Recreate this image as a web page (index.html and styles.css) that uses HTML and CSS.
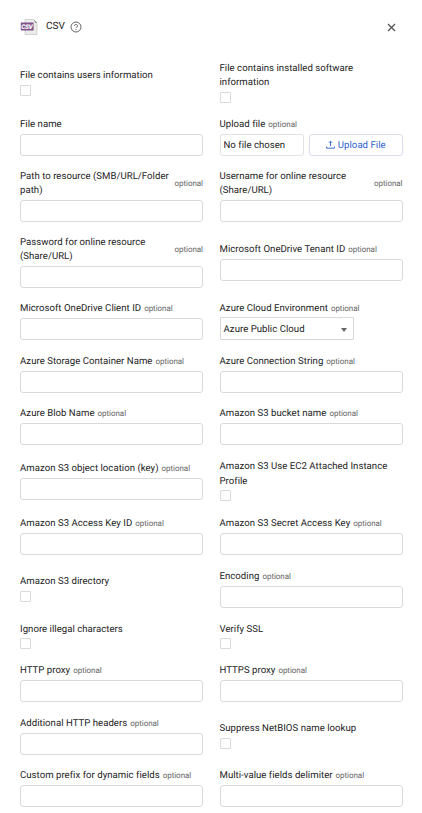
FILE: index.html
```html
<!DOCTYPE html>
<html lang="en">
<head>
<meta charset="utf-8">
<title>CSV</title>
<link rel="stylesheet" href="styles.css">
</head>
<body>
<header class="header">
  <svg class="logo" width="18" height="18" viewBox="0 0 18 18">
    <path d="M5 1.500h8.500l3.500 3.500v11.500H5z" fill="#ececea" stroke="#c9c9c7" stroke-width=".8"/>
    <path d="M13.500 1.200l3.500 3.800h-1.500z" fill="#777"/>
    <rect x="0.800" y="4.500" width="12.800" height="8" fill="#80528c"/>
    <text class="logo-text" x="1.200" y="10.900" textLength="11.500">CSV</text>
  </svg>
  <h1 class="title">CSV</h1>
  <svg class="help" width="12" height="12" viewBox="0 0 12 12" fill="none" stroke="#555">
    <circle cx="6" cy="6" r="5" stroke-width=".9"/>
    <path d="M4.500 4.900a1.500 1.400 0 1 1 2.300 1.100c-.6.4-.8.600-.8 1.100M6 8v.9" stroke-width=".9"/>
  </svg>
  <svg class="close" width="9" height="9" viewBox="0 0 9 9" stroke="#555" stroke-width="1.300"><path d="M1 1l7 7M8 1l-7 7"/></svg>
</header>
<form class="form">
  <div class="field check"><label>File contains users information</label><span class="box"></span></div>
  <div class="field check"><label>File contains installed software information</label><span class="box"></span></div>

  <div class="field"><div class="caption"><label>File name</label></div><div class="input"></div></div>
  <div class="field"><div class="caption"><label>Upload file</label><small>optional</small></div>
    <div class="upload"><div class="file">No file chosen</div><div class="button"><svg width="9" height="9" viewBox="0 0 9 9" fill="none" stroke="#2b5fd0" stroke-width=".9"><path d="M.6 6.500v1.700h7.800V6.500M4.500 6.200V1.200M2.900 2.800l1.600-1.600 1.600 1.600"/></svg><span class="button-text">Upload File</span></div></div></div>

  <div class="field"><div class="caption"><label>Path to resource (SMB/URL/Folder path)</label><small>optional</small></div><div class="input"></div></div>
  <div class="field"><div class="caption wide"><label>Username for online resource (Share/URL)</label><small>optional</small></div><div class="input"></div></div>

  <div class="field"><div class="caption wide"><label>Password for online resource (Share/URL)</label><small>optional</small></div><div class="input"></div></div>
  <div class="field"><div class="caption"><label>Microsoft OneDrive Tenant ID</label><small>optional</small></div><div class="input"></div></div>

  <div class="field"><div class="caption"><label>Microsoft OneDrive Client ID</label><small>optional</small></div><div class="input"></div></div>
  <div class="field"><div class="caption"><label>Azure Cloud Environment</label><small>optional</small></div><div class="select">Azure Public Cloud<i class="arrow"></i></div></div>

  <div class="field"><div class="caption"><label>Azure Storage Container Name</label><small>optional</small></div><div class="input"></div></div>
  <div class="field"><div class="caption"><label>Azure Connection String</label><small>optional</small></div><div class="input"></div></div>

  <div class="field"><div class="caption"><label>Azure Blob Name</label><small>optional</small></div><div class="input"></div></div>
  <div class="field"><div class="caption"><label>Amazon S3 bucket name</label><small>optional</small></div><div class="input"></div></div>

  <div class="field"><div class="caption"><label>Amazon S3 object location (key)</label><small>optional</small></div><div class="input"></div></div>
  <div class="field check"><label>Amazon S3 Use EC2 Attached Instance Profile</label><span class="box"></span></div>

  <div class="field"><div class="caption"><label>Amazon S3 Access Key ID</label><small>optional</small></div><div class="input"></div></div>
  <div class="field"><div class="caption"><label>Amazon S3 Secret Access Key</label><small>optional</small></div><div class="input"></div></div>

  <div class="field check"><label>Amazon S3 directory</label><span class="box"></span></div>
  <div class="field"><div class="caption"><label>Encoding</label><small>optional</small></div><div class="input"></div></div>

  <div class="field check"><label>Ignore illegal characters</label><span class="box"></span></div>
  <div class="field check"><label>Verify SSL</label><span class="box"></span></div>

  <div class="field"><div class="caption"><label>HTTP proxy</label><small>optional</small></div><div class="input"></div></div>
  <div class="field"><div class="caption"><label>HTTPS proxy</label><small>optional</small></div><div class="input"></div></div>

  <div class="field"><div class="caption"><label>Additional HTTP headers</label><small>optional</small></div><div class="input"></div></div>
  <div class="field check"><label>Suppress NetBIOS name lookup</label><span class="box"></span></div>

  <div class="field"><div class="caption"><label>Custom prefix for dynamic fields</label><small>optional</small></div><div class="input"></div></div>
  <div class="field"><div class="caption"><label>Multi-value fields delimiter</label><small>optional</small></div><div class="input"></div></div>
</form>
</body>
</html>
```
FILE: styles.css
```css
* { box-sizing: border-box; }
body {
  margin: 0;
  height: 813px;
  overflow: hidden;
  background: #fff;
  color: #222;
  font: 9.600px/13.800px Roboto, sans-serif;
  letter-spacing: .03px;
  text-rendering: geometricPrecision;
}
.header {
  display: flex;
  align-items: center;
  height: 54px;
  padding: 0 26px 0 20px;
}
.logo-text { font: italic 900 6.500px Roboto, sans-serif; letter-spacing: 0; fill: #fff; }
.title { margin: -1px 0 0 8px; font-size: 10px; font-weight: 400; }
.help { margin-left: 5px; }
.close { margin-left: auto; }
.form {
  display: grid;
  grid-template-columns: 183px 183px;
  grid-template-rows: 43px 39.500px 53px 53px 39.500px 39.500px 39.500px 44.200px 39.800px 40px 28.500px 39.500px 39.500px 39.500px;
  gap: 13px 16.500px;
  align-items: center;
  padding: 6.400px 0 0 20px;
}
.field { display: flex; flex-direction: column; }
.caption { display: flex; align-items: center; padding-top: 1.200px; margin-bottom: 2.300px; }
.wide { justify-content: space-between; }
small { margin-left: 3px; font-size: 8px; letter-spacing: -.05px; color: #666; }
.input { height: 22px; border: 1px solid #dadada; border-radius: 3px; }
.check label { padding-top: .8px; line-height: 14.200px; }
.box { width: 11px; height: 11px; margin-top: 1.700px; border: 1px solid #dadada; border-radius: 1px; }
.upload { display: flex; gap: 5px; height: 22px; line-height: 21px; }
.file { width: 84.500px; padding-left: 3px; border: 1px solid #e2e2e2; border-radius: 3px; }
.button {
  display: flex;
  flex: 1;
  align-items: center;
  justify-content: center;
  gap: 3px;
  border: 1px solid #d9dcec;
  border-radius: 3px;
  color: #2b5fd0;
}
.button-text { padding-top: 1px; }
.select {
  display: flex;
  align-items: center;
  justify-content: space-between;
  width: 134px;
  height: 23px;
  margin-top: -1px;
  padding: 1.500px 6px 0 3px;
  border: 1px solid #d8d8d8;
  border-radius: 1px;
}
.arrow { margin-top: 1px; border: 3.500px solid transparent; border-top: 4px solid #666; border-bottom: 0; }
```
